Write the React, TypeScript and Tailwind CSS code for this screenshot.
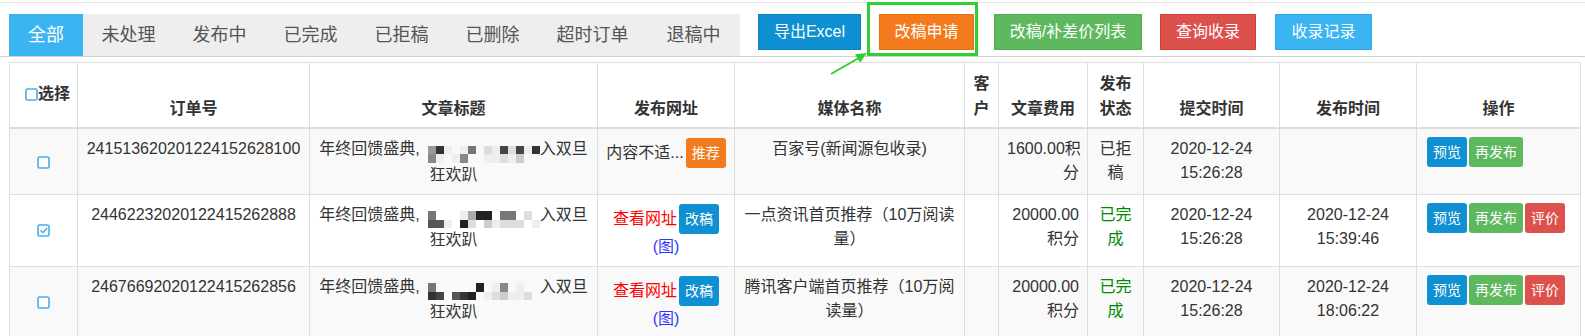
import React from 'react';

const tabs = [
  { label: '全部', w: 'w-[74px]' },
  { label: '未处理', w: 'w-[91px]' },
  { label: '发布中', w: 'w-[91px]' },
  { label: '已完成', w: 'w-[91px]' },
  { label: '已拒稿', w: 'w-[91px]' },
  { label: '已删除', w: 'w-[91px]' },
  { label: '超时订单', w: 'w-[109px]' },
  { label: '退稿中', w: 'w-[93px]' },
];

const actions = [
  { label: '导出Excel', cls: 'w-[103px] bg-[#0e90d2] border-[#0b80bb]' },
  { label: '改稿申请', cls: 'w-[95px] ml-[18px] bg-[#f37b1d] border-[#e86f10]' },
  { label: '改稿/补差价列表', cls: 'w-[148px] ml-[20px] bg-[#5eb95e] border-[#52ad52]' },
  { label: '查询收录', cls: 'w-[96px] ml-[18px] bg-[#dd514c] border-[#d2403b]' },
  { label: '收录记录', cls: 'w-[97px] ml-[19px] bg-[#3bb4f2] border-[#2eaaea]' },
];

const cols = ['w-[68px]', 'w-[232px]', 'w-[288px]', 'w-[137px]', 'w-[230px]', 'w-[34px]', 'w-[89px]', 'w-[56px]', 'w-[136px]', 'w-[137px]', 'w-[164px]'];

const heads = ['订单号', '文章标题', '发布网址', '媒体名称', '客户', '文章费用', '发布状态', '提交时间', '发布时间', '操作'];

type Row = {
  id: string;
  mosaic: string[];
  url: 'tip' | 'link';
  media: string[];
  fee: string[];
  status: string[];
  done: boolean;
  submit: string[];
  publish: string[];
  rate: boolean;
  checked: boolean;
};

const rows: Row[] = [
  {
    id: '241513620201224152628100',
    mosaic: [' 93e e7 de4d4e3', ' 8e e8  eedec  '],
    url: 'tip',
    media: ['百家号(新闻源包收录)'],
    fee: ['1600.00积', '分'],
    status: ['已拒', '稿'],
    done: false,
    submit: ['2020-12-24', '15:26:28'],
    publish: [],
    rate: false,
    checked: false,
  },
  {
    id: '24462232020122415262888',
    mosaic: [' 7   ea22 77 d ', ' 55e 2d ceddd e'],
    url: 'link',
    media: ['一点资讯首页推荐（10万阅读', '量）'],
    fee: ['20000.00', '积分'],
    status: ['已完', '成'],
    done: true,
    submit: ['2020-12-24', '15:26:28'],
    publish: ['2020-12-24', '15:39:46'],
    rate: true,
    checked: true,
  },
  {
    id: '24676692020122415262856',
    mosaic: [' 7     2 e8 e  ', ' 34 532 edceed '],
    url: 'link',
    media: ['腾讯客户端首页推荐（10万阅', '读量）'],
    fee: ['20000.00', '积分'],
    status: ['已完', '成'],
    done: true,
    submit: ['2020-12-24', '15:26:28'],
    publish: ['2020-12-24', '18:06:22'],
    rate: true,
    checked: false,
  },
];

const Check = ({ checked }: { checked?: boolean }) => (
  <svg width="13" height="13" viewBox="0 0 13 13" className="inline-block">
    <rect x="1" y="1" width="11" height="11" rx="1.5" fill="white" stroke="#49aee9" strokeWidth="1.6" />
    {checked && <path d="M3.6 6.4 L5.9 8.7 L10.2 3.9" fill="none" stroke="#49aee9" strokeWidth="1.5" />}
  </svg>
);

// pixelated blur over part of the title
const Mosaic = ({ rows }: { rows: string[] }) => (
  <span className="inline-flex flex-col">
    {rows.map((r, i) => (
      <span key={i} className="flex">
        {r.split('').map((c, j) => (
          <span
            key={j}
            className="w-[8px] h-[8.5px]"
            style={{ background: c === ' ' ? 'transparent' : `#${c}${c}${c}` }}
          />
        ))}
      </span>
    ))}
  </span>
);

const SmallBtn = ({ color, children }: { color: string; children: React.ReactNode }) => (
  <span className={`inline-block h-[30px] px-[6px] rounded-[3px] text-[14px] leading-[30px] text-white ${color}`}>
    {children}
  </span>
);

const Lines = ({ lines, cls = '' }: { lines: string[]; cls?: string }) => (
  <div className={cls}>
    {lines.map((l, i) => (
      <div key={i} className="whitespace-nowrap">{l}</div>
    ))}
  </div>
);

const td = 'border border-[#ddd] px-[8px] pt-[8px] pb-[7px] leading-[24px] align-top text-center';

const App = () => {
  return (
    <div className="relative w-[1585px] h-[336px] overflow-hidden bg-white font-['Liberation_Sans','Noto_Sans_CJK_SC',sans-serif]">
      <div className="mt-[2px] border-t border-[#e3e3e3] border-b-[#d0d0d0] border-b pl-[9px] pt-[11px] flex items-start">
        <div className="flex bg-[#eeeeee] h-[42px] w-[731px]">
          {tabs.map((t, i) => (
            <div
              key={t.label}
              className={`${t.w} text-center leading-[42px] text-[18px] ${i === 0 ? 'bg-[#3bb4f2] text-white' : 'text-[#555]'}`}
            >
              {t.label}
            </div>
          ))}
        </div>
        <div className="flex ml-[18px]">
          {actions.map((a) => (
            <button key={a.label} className={`h-[36px] border text-center text-[16px] leading-[34px] text-white whitespace-nowrap ${a.cls}`}>
              {a.label}
            </button>
          ))}
        </div>
      </div>

      <div className="pl-[9px] pt-[5px]">
        <table className="table-fixed border-collapse w-[1571px] text-[16px] text-[#333]">
          <colgroup>
            {cols.map((c, i) => (
              <col key={i} className={c} />
            ))}
          </colgroup>
          <thead>
            <tr className="bg-white">
              <th className="border border-[#ddd] border-b-2 pl-[15px] pr-0 align-middle text-left font-bold">
                <span className="inline-flex items-center">
                  <Check />
                  <span>选择</span>
                </span>
              </th>
              {heads.map((h) => (
                <th key={h} className="border border-[#ddd] border-b-2 px-[8px] pt-[8px] pb-[6px] leading-[25px] align-bottom text-center font-bold">
                  {h}
                </th>
              ))}
            </tr>
          </thead>
          <tbody>
            {rows.map((r, idx) => (
              <tr key={r.id} className={idx % 2 === 0 ? 'bg-[#f9f9f9]' : 'bg-white'}>
                <td className="border border-[#ddd] align-middle text-center">
                  <Check checked={r.checked} />
                </td>
                <td className={td}>{r.id}</td>
                <td className={td}>
                  <div className="whitespace-nowrap">
                    年终回馈盛典,<Mosaic rows={r.mosaic} />入双旦
                  </div>
                  <div>狂欢趴</div>
                </td>
                <td className={td}>
                  {r.url === 'tip' ? (
                    <div className="flex justify-center items-center h-[32px] gap-[2px]">
                      <span className="whitespace-nowrap">内容不适...</span>
                      <SmallBtn color="bg-[#f37b1d]">推荐</SmallBtn>
                    </div>
                  ) : (
                    <>
                      <div className="flex justify-center items-center h-[32px] gap-[2px]">
                        <span className="whitespace-nowrap text-[#ff0000]">查看网址</span>
                        <SmallBtn color="bg-[#0e90d2]">改稿</SmallBtn>
                      </div>
                      <div className="text-[#3535ff]">(图)</div>
                    </>
                  )}
                </td>
                <td className={td}>
                  <Lines lines={r.media} />
                </td>
                <td className={td}></td>
                <td className={`${td} !text-right`}>
                  <Lines lines={r.fee} />
                </td>
                <td className={td}>
                  <Lines lines={r.status} cls={r.done ? 'text-[#008a00]' : ''} />
                </td>
                <td className={td}>
                  <Lines lines={r.submit} />
                </td>
                <td className={td}>
                  <Lines lines={r.publish} />
                </td>
                <td className={`${td} !text-left !pl-[10px]`}>
                  <div className="flex gap-[2px]">
                    <SmallBtn color="bg-[#0e90d2]">预览</SmallBtn>
                    <SmallBtn color="bg-[#5eb95e]">再发布</SmallBtn>
                    {r.rate && <SmallBtn color="bg-[#dd514c]">评价</SmallBtn>}
                  </div>
                </td>
              </tr>
            ))}
          </tbody>
        </table>
      </div>

      <div className="absolute left-[867px] top-[2px] w-[111px] h-[54px] border-[3px] border-[#2fcf2f]" />
      <svg className="absolute left-[825px] top-[48px]" width="50" height="32" viewBox="0 0 50 32">
        <line x1="6" y1="26" x2="33" y2="10.5" stroke="#2fcf2f" strokeWidth="2" />
        <polygon points="42,5 35,14.8 30,6.2" fill="#2fcf2f" />
      </svg>
    </div>
  );
};

export default App;
